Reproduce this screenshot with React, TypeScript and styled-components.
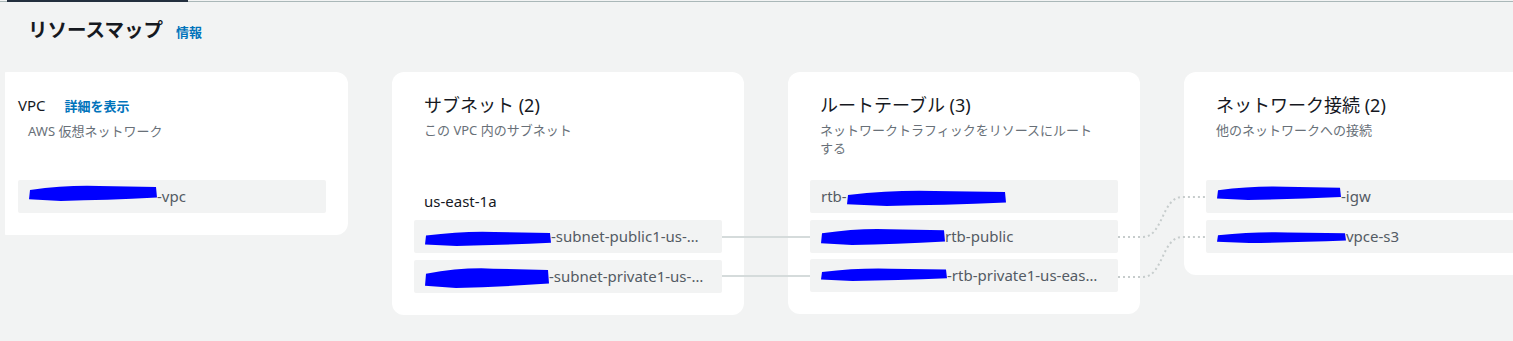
import React from 'react';
import styled, {createGlobalStyle} from 'styled-components';

const GlobalStyle = createGlobalStyle`
    html, body {
        margin: 0;
        padding: 0;
        background: #f2f3f3;
        font-family: "Noto Sans", "Noto Sans CJK JP", sans-serif;
        overflow: hidden;
    }
`;

type Part = string | {w: number, h: number, dy?: number};

type CardData = {
    title: string,
    subtitle: string,
    az?: string,
    rows: Part[][],
    vpc?: boolean,
};

const cards: CardData[] = [
    {
        title: 'VPC',
        subtitle: 'AWS 仮想ネットワーク',
        vpc: true,
        rows: [[{w: 128, h: 17, dy: -5}, '-vpc']],
    },
    {
        title: 'サブネット (2)',
        subtitle: 'この VPC 内のサブネット',
        az: 'us-east-1a',
        rows: [
            [{w: 126, h: 16}, '-subnet-public1-us-…'],
            [{w: 124, h: 22}, '-subnet-private1-us-…'],
        ],
    },
    {
        title: 'ルートテーブル (3)',
        subtitle: 'ネットワークトラフィックをリソースにルートする',
        rows: [
            ['rtb-', {w: 159, h: 17}],
            [{w: 124, h: 18, dy: -1}, 'rtb-public'],
            [{w: 126, h: 14, dy: -3}, '-rtb-private1-us-eas…'],
        ],
    },
    {
        title: 'ネットワーク接続 (2)',
        subtitle: '他のネットワークへの接続',
        rows: [
            [{w: 124, h: 15, dy: -5}, '-igw'],
            [{w: 129, h: 12}, 'vpce-s3'],
        ],
    },
];

const Scribble = ({w, h, dy = 0}: {w: number, h: number, dy?: number}) => (
    <ScribbleSvg width={w} height={h} $dy={dy} viewBox={`0 0 ${w} ${h}`}>
        <path
            d={`M1 ${h * 0.35} Q${w * 0.3} ${h * 0.05} ${w * 0.55} ${h * 0.12} L${w - 1} ${h * 0.18} L${w} ${h * 0.8} Q${w * 0.6} ${h * 0.95} ${w * 0.25} ${h} L0 ${h * 0.9} Z`}
            fill="#0000ff"
        />
    </ScribbleSvg>
);

const Row = ({parts}: {parts: Part[]}) => (
    <StyledRow>
        {parts.map((p, i) => typeof p === 'string'
            ? <span key={i}>{p}</span>
            : <Scribble key={i} w={p.w} h={p.h} dy={p.dy}/>
        )}
    </StyledRow>
);

const Card = ({card}: {card: CardData}) => (
    <StyledCard>
        <CardHeader>
            {card.vpc ? (
                <VpcLine>
                    <VpcLabel>{card.title}</VpcLabel>
                    <SmallLink>詳細を表示</SmallLink>
                </VpcLine>
            ) : (
                <CardTitle>{card.title}</CardTitle>
            )}
            <CardSubtitle>{card.subtitle}</CardSubtitle>
        </CardHeader>
        <Rows>
            {card.az && <AzLabel>{card.az}</AzLabel>}
            {card.rows.map((r, i) => <Row key={i} parts={r}/>)}
        </Rows>
    </StyledCard>
);

const Connectors = () => (
    <ConnectorSvg width="1540" height="260">
        <g stroke="#d5dbdb" strokeWidth="2" fill="none">
            <line x1="726" y1="165" x2="814" y2="165"/>
            <line x1="726" y1="204" x2="814" y2="204"/>
        </g>
        <g stroke="#c6cccc" strokeWidth="2" fill="none" strokeDasharray="2 3">
            <path d="M1122 165 H1147 C1167 165 1166 125 1186 125 H1210"/>
            <path d="M1122 205 H1147 C1167 205 1166 165 1186 165 H1210"/>
        </g>
    </ConnectorSvg>
);

export default function App() {
    return (
        <Page>
            <GlobalStyle/>
            <TopBar>
                <TopSpacer/>
                <ActiveTab/>
                <TabRest/>
            </TopBar>
            <TitleRow>
                <PageTitle>リソースマップ</PageTitle>
                <InfoLink>情報</InfoLink>
            </TitleRow>
            <MapViewport>
                <MapTrack>
                    {cards.map((c, i) => <Card key={i} card={c}/>)}
                    <Connectors/>
                </MapTrack>
            </MapViewport>
        </Page>
    );
}

const Page = styled.div`
    width: 1513px;
    height: 341px;
    background: #f2f3f3;
    overflow: hidden;
`;

const TopBar = styled.div`
    display: flex;
    align-items: flex-start;
    height: 2px;
`;

const TopSpacer = styled.div`
    width: 7px;
    height: 1px;
    margin-top: 1px;
    background: #aab7b8;
`;

const ActiveTab = styled.div`
    width: 181px;
    height: 2px;
    background: #232f3e;
`;

const TabRest = styled.div`
    flex: 1;
    height: 1px;
    margin-top: 1px;
    background: #aab7b8;
`;

const TitleRow = styled.div`
    display: flex;
    align-items: baseline;
    gap: 13px;
    padding: 14px 28px 0;
`;

const PageTitle = styled.h2`
    margin: 0;
    font-size: 19.5px;
    line-height: 28px;
    font-weight: 700;
    color: #16191f;
`;

const InfoLink = styled.a`
    font-size: 13px;
    font-weight: 700;
    color: #0073bb;
`;

const MapViewport = styled.div`
    margin: 28px 0 0 5px;
    overflow: hidden;
`;

const MapTrack = styled.div`
    position: relative;
    display: flex;
    align-items: flex-start;
    gap: 44px;
    margin-left: -9px;
    width: 1540px;
`;

const ConnectorSvg = styled.svg`
    position: absolute;
    left: 0;
    top: 0;
    pointer-events: none;
`;

const StyledCard = styled.div`
    flex-shrink: 0;
    width: 352px;
    box-sizing: border-box;
    padding: 0 22px 22px;
    background: #ffffff;
    border-radius: 12px;
`;

const CardHeader = styled.div`
    height: 108px;
    box-sizing: border-box;
    padding: 21px 18px 0 10px;
`;

const CardTitle = styled.div`
    font-size: 18px;
    line-height: 24px;
    color: #16191f;
`;

const VpcLine = styled.div`
    display: flex;
    align-items: baseline;
    gap: 19px;
    margin-left: -10px;
    line-height: 24px;
`;

const VpcLabel = styled.span`
    font-size: 15px;
    color: #16191f;
`;

const SmallLink = styled.a`
    font-size: 13px;
    font-weight: 700;
    color: #0073bb;
`;

const CardSubtitle = styled.div`
    margin-top: 4px;
    font-size: 13px;
    line-height: 18px;
    color: #687078;
`;

const Rows = styled.div`
    display: flex;
    flex-direction: column;
    gap: 6.5px;
`;

const AzLabel = styled.div`
    height: 40px;
    box-sizing: border-box;
    padding: 10px 0 0 10px;
    margin-bottom: -6.5px;
    font-size: 15px;
    line-height: 22px;
    color: #16191f;
`;

const StyledRow = styled.div`
    height: 33px;
    box-sizing: border-box;
    padding: 0 14px 0 11px;
    background: #f2f3f3;
    border-radius: 2px;
    font-size: 15px;
    line-height: 33px;
    color: #545b64;
    white-space: nowrap;
    overflow: hidden;
`;

const ScribbleSvg = styled.svg<{$dy: number}>`
    vertical-align: middle;
    transform: translateY(${p => p.$dy}px);
`;
